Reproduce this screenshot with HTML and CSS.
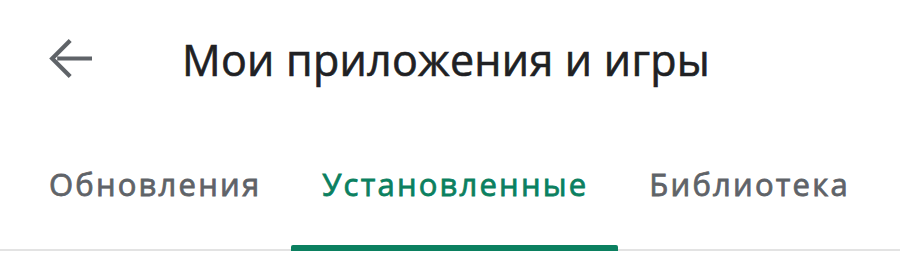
FILE: index.html
```html
<!DOCTYPE html>
<html lang="ru">
<head>
<meta charset="utf-8">
<link rel="stylesheet" href="styles.css">
</head>
<body>
<div class="screen">
  <header class="appbar">
    <span class="back">
      <svg width="44" height="44" viewBox="0 0 44 44"><path d="M44 21.5H9.2M22.2 3.6L4.2 21.5l18 17.9" fill="none" stroke="#5f6368" stroke-width="4.2" stroke-linecap="butt" stroke-linejoin="miter"/></svg>
    </span>
    <h1 class="title">Мои приложения и игры</h1>
  </header>
  <nav class="tabs">
    <div class="tab">Обновления</div>
    <div class="tab active">Установленные</div>
    <div class="tab">Библиотека</div>
  </nav>
</div>
</body>
</html>
```
FILE: styles.css
```css
html, body { margin: 0; padding: 0; background: #fff; }
body { font-family: "Open Sans", Roboto, "Liberation Sans", sans-serif; }
.screen { width: 900px; height: 255px; overflow: hidden; }
.appbar { display: flex; align-items: center; height: 118px; padding-left: 48px; }
.back { display: flex; width: 44px; height: 44px; }
.title { margin: 0 0 0 90px; font-size: 43px; font-weight: 400; color: #202124; letter-spacing: 0.25px; line-height: 1; -webkit-text-stroke: 0.6px #202124; }
.tabs { display: flex; padding-left: 18px; border-bottom: 2px solid #e3e3e3; box-sizing: border-box; height: 133px; }
.tab { padding: 0 30px 0 31px; display: flex; align-items: center; font-size: 31px; font-weight: 400; letter-spacing: 2.2px; color: #5f6368; -webkit-text-stroke: 0.8px currentColor; position: relative; }
.tab.active { color: #0b8060; }
.tab.active::after { content: ""; position: absolute; left: 0; right: 0; bottom: -2px; height: 6px; background: #0b8060; border-radius: 2px 2px 0 0; }
```
